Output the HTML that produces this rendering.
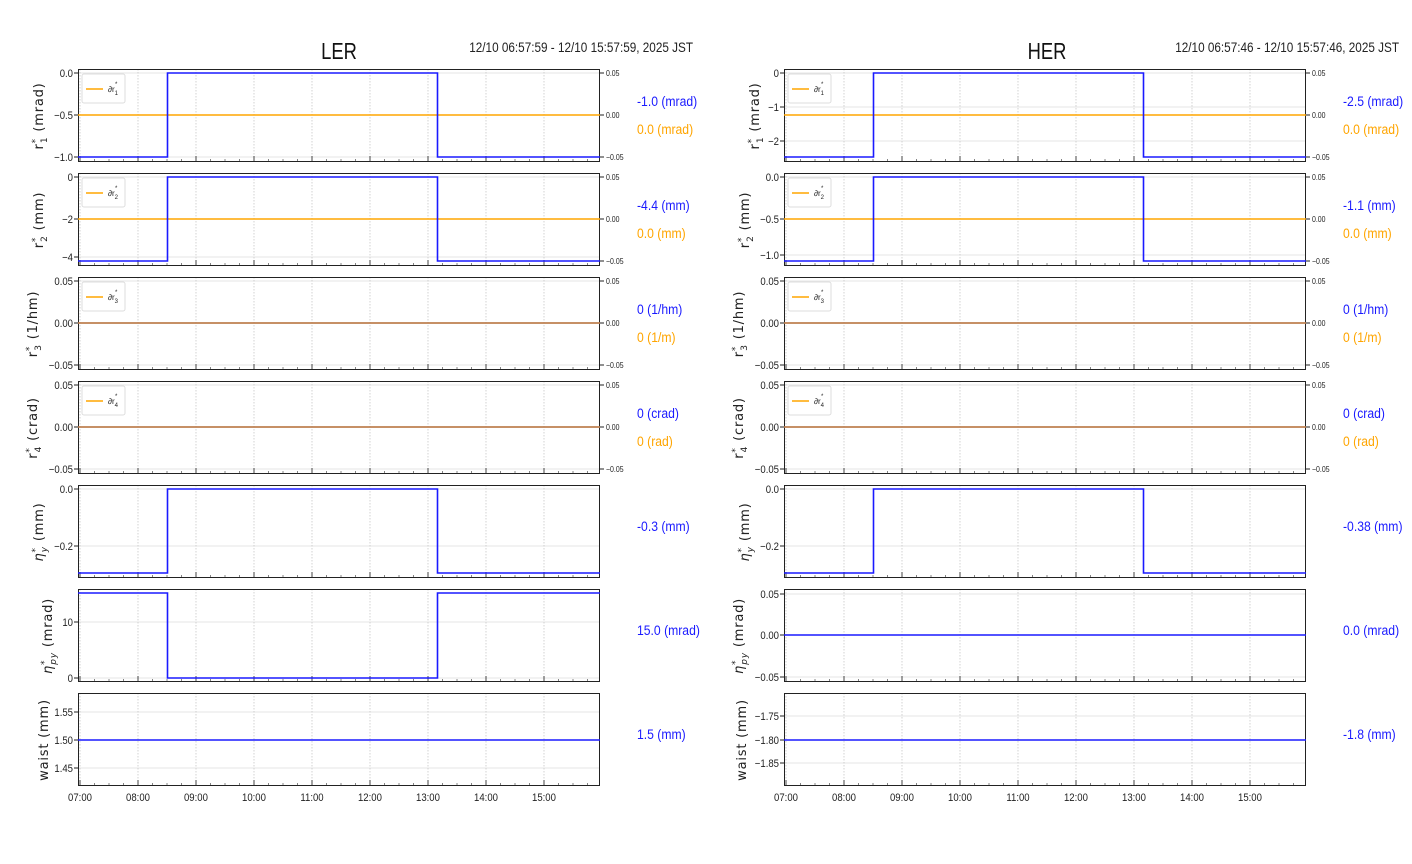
<!DOCTYPE html>
<html><head><meta charset="utf-8"><style>
html,body{margin:0;padding:0;background:#fff;}
svg{display:block;}
text{font-family:"Liberation Sans Narrow","Liberation Sans",sans-serif;}
.tk{font-size:11px;fill:#222;}
.tr{font-size:8px;fill:#222;}
.yl{font-family:"DejaVu Sans",sans-serif;font-size:13px;fill:#222;letter-spacing:0.8px;}
.vb{font-size:14px;fill:#1a1aff;}
.vo{font-size:14px;fill:#ffa500;}
</style></head><body>
<svg width="1412" height="864" viewBox="0 0 1412 864" xmlns="http://www.w3.org/2000/svg">
<defs>
<g id="P">
<path d="M2 0V93M60 0V93M118 0V93M176 0V93M234 0V93M292 0V93M350 0V93M408 0V93M466 0V93" stroke="#c8c8c8" stroke-width="0.8" stroke-dasharray="1.5,1.5" fill="none"/>
<path d="M2 87V93M60 87V93M118 87V93M176 87V93M234 87V93M292 87V93M350 87V93M408 87V93M466 87V93" stroke="#444" stroke-width="1"/>
<path d="M16.5 90V93M31 90V93M45.5 90V93M74.5 90V93M89 90V93M103.5 90V93M132.5 90V93M147 90V93M161.5 90V93M190.5 90V93M205 90V93M219.5 90V93M248.5 90V93M263 90V93M277.5 90V93M306.5 90V93M321 90V93M335.5 90V93M364.5 90V93M379 90V93M393.5 90V93M422.5 90V93M437 90V93M451.5 90V93M480.5 90V93M495 90V93M509.5 90V93" stroke="#666" stroke-width="0.8"/>
<rect x="0.5" y="0.5" width="521" height="92" fill="none" stroke="#222" stroke-width="1"/>
</g>
<g id="R">
<path d="M522 4H526M522 46H526M522 88H526" stroke="#222"/>
<g transform="translate(528,0) scale(0.87,1)">
<text class="tr" x="0" y="7">0.05</text>
<text class="tr" x="0" y="49">0.00</text>
<text class="tr" x="0" y="91">−0.05</text>
</g>
</g>
<path id="HG3" d="M0 4H522M0 46H522M0 88H522" stroke="#ddd" stroke-width="0.8"/>
<path id="STEP" d="M0 88H89.5V4H359.5V88H522" stroke="#1a1aff" stroke-width="1.6" fill="none"/>
<path id="STEPI" d="M0 4H89.5V89H359.5V4H522" stroke="#1a1aff" stroke-width="1.6" fill="none"/>
<rect id="LB" x="4" y="5" width="43" height="29" rx="2" fill="#fff" fill-opacity="0.85" stroke="#ddd"/>
<g id="XL" class="tk" text-anchor="middle" transform="scale(0.87,1)">
<text x="2.3" y="108">07:00</text><text x="69" y="108">08:00</text><text x="135.6" y="108">09:00</text><text x="202.3" y="108">10:00</text><text x="269" y="108">11:00</text><text x="335.6" y="108">12:00</text><text x="402.3" y="108">13:00</text><text x="469" y="108">14:00</text><text x="535.6" y="108">15:00</text>
</g>
</defs>

<!-- Titles -->
<text transform="translate(339,59) scale(0.8,1)" text-anchor="middle" style="font-size:23px" fill="#111">LER</text>
<text transform="translate(693,52) scale(0.87,1)" text-anchor="end" style="font-size:13.5px" fill="#222">12/10 06:57:59 - 12/10 15:57:59, 2025 JST</text>
<text transform="translate(1047,59) scale(0.8,1)" text-anchor="middle" style="font-size:23px" fill="#111">HER</text>
<text transform="translate(1399,52) scale(0.87,1)" text-anchor="end" style="font-size:13.5px" fill="#222">12/10 06:57:46 - 12/10 15:57:46, 2025 JST</text>

<!-- ============ LER ============ -->
<g transform="translate(78,69)">
<use href="#HG3"/><use href="#P"/><use href="#R"/>
<path d="M0 46H522" stroke="#ffa500" stroke-width="1.6"/>
<use href="#STEP"/>
<use href="#LB"/><path d="M8 20H25" stroke="#ffa500" stroke-width="1.6"/><text class="tr" x="30" y="23">∂r<tspan font-size="6" dy="3">1</tspan><tspan font-size="6" dx="-3" dy="-9">*</tspan></text>
<path d="M-4 4H0M-4 46H0M-4 88H0" stroke="#222"/>
<g transform="translate(-5,0) scale(0.87,1)" text-anchor="end">
<text class="tk" x="0" y="8">0.0</text>
<text class="tk" x="0" y="50">−0.5</text>
<text class="tk" x="0" y="92">−1.0</text>
</g>
</g>
<text class="yl" transform="translate(43,116) rotate(-90)" text-anchor="middle">r<tspan font-size="9" dy="-5">*</tspan><tspan font-size="9" dx="-5" dy="9">1</tspan><tspan dy="-4"> (mrad)</tspan></text>
<text class="vb" transform="translate(637,106) scale(0.87,1)">-1.0 (mrad)</text>
<text class="vo" transform="translate(637,134) scale(0.87,1)">0.0 (mrad)</text>

<g transform="translate(78,173)">
<path d="M0 4H522M0 46H522M0 84H522" stroke="#ddd" stroke-width="0.8"/><use href="#P"/><use href="#R"/>
<path d="M0 46H522" stroke="#ffa500" stroke-width="1.6"/>
<use href="#STEP"/>
<use href="#LB"/><path d="M8 20H25" stroke="#ffa500" stroke-width="1.6"/><text class="tr" x="30" y="23">∂r<tspan font-size="6" dy="3">2</tspan><tspan font-size="6" dx="-3" dy="-9">*</tspan></text>
<path d="M-4 4H0M-4 46H0M-4 84H0" stroke="#222"/>
<g transform="translate(-5,0) scale(0.87,1)" text-anchor="end">
<text class="tk" x="0" y="8">0</text>
<text class="tk" x="0" y="50">−2</text>
<text class="tk" x="0" y="88">−4</text>
</g>
</g>
<text class="yl" transform="translate(43,220) rotate(-90)" text-anchor="middle">r<tspan font-size="9" dy="-5">*</tspan><tspan font-size="9" dx="-5" dy="9">2</tspan><tspan dy="-4"> (mm)</tspan></text>
<text class="vb" transform="translate(637,210) scale(0.87,1)">-4.4 (mm)</text>
<text class="vo" transform="translate(637,238) scale(0.87,1)">0.0 (mm)</text>

<g transform="translate(78,277)">
<use href="#HG3"/><use href="#P"/><use href="#R"/>
<path d="M0 46H522" stroke="#1a1aff" stroke-width="1.6"/>
<path d="M0 46H522" stroke="#ffa500" stroke-width="1.4" stroke-opacity="0.8"/>
<use href="#LB"/><path d="M8 20H25" stroke="#ffa500" stroke-width="1.6"/><text class="tr" x="30" y="23">∂r<tspan font-size="6" dy="3">3</tspan><tspan font-size="6" dx="-3" dy="-9">*</tspan></text>
<path d="M-4 4H0M-4 46H0M-4 88H0" stroke="#222"/>
<g transform="translate(-5,0) scale(0.87,1)" text-anchor="end">
<text class="tk" x="0" y="8">0.05</text>
<text class="tk" x="0" y="50">0.00</text>
<text class="tk" x="0" y="92">−0.05</text>
</g>
</g>
<text class="yl" transform="translate(37,324) rotate(-90)" text-anchor="middle">r<tspan font-size="9" dy="-5">*</tspan><tspan font-size="9" dx="-5" dy="9">3</tspan><tspan dy="-4"> (1/hm)</tspan></text>
<text class="vb" transform="translate(637,314) scale(0.87,1)">0 (1/hm)</text>
<text class="vo" transform="translate(637,342) scale(0.87,1)">0 (1/m)</text>

<g transform="translate(78,381)">
<use href="#HG3"/><use href="#P"/><use href="#R"/>
<path d="M0 46H522" stroke="#1a1aff" stroke-width="1.6"/>
<path d="M0 46H522" stroke="#ffa500" stroke-width="1.4" stroke-opacity="0.8"/>
<use href="#LB"/><path d="M8 20H25" stroke="#ffa500" stroke-width="1.6"/><text class="tr" x="30" y="23">∂r<tspan font-size="6" dy="3">4</tspan><tspan font-size="6" dx="-3" dy="-9">*</tspan></text>
<path d="M-4 4H0M-4 46H0M-4 88H0" stroke="#222"/>
<g transform="translate(-5,0) scale(0.87,1)" text-anchor="end">
<text class="tk" x="0" y="8">0.05</text>
<text class="tk" x="0" y="50">0.00</text>
<text class="tk" x="0" y="92">−0.05</text>
</g>
</g>
<text class="yl" transform="translate(37,428) rotate(-90)" text-anchor="middle">r<tspan font-size="9" dy="-5">*</tspan><tspan font-size="9" dx="-5" dy="9">4</tspan><tspan dy="-4"> (crad)</tspan></text>
<text class="vb" transform="translate(637,418) scale(0.87,1)">0 (crad)</text>
<text class="vo" transform="translate(637,446) scale(0.87,1)">0 (rad)</text>

<g transform="translate(78,485)">
<path d="M0 4H522M0 61H522" stroke="#ddd" stroke-width="0.8"/><use href="#P"/>
<use href="#STEP"/>
<path d="M-4 4H0M-4 61H0" stroke="#222"/>
<g transform="translate(-5,0) scale(0.87,1)" text-anchor="end">
<text class="tk" x="0" y="8">0.0</text>
<text class="tk" x="0" y="65">−0.2</text>
</g>
</g>
<text class="yl" transform="translate(43,532) rotate(-90)" text-anchor="middle"><tspan font-style="italic">η</tspan><tspan font-size="9" dy="-5">*</tspan><tspan font-size="9" font-style="italic" dx="-5" dy="9">y</tspan><tspan dy="-4"> (mm)</tspan></text>
<text class="vb" transform="translate(637,531) scale(0.87,1)">-0.3 (mm)</text>

<g transform="translate(78,589)">
<path d="M0 33H522M0 89H522" stroke="#ddd" stroke-width="0.8"/><use href="#P"/>
<use href="#STEPI"/>
<path d="M-4 33H0M-4 89H0" stroke="#222"/>
<g transform="translate(-5,0) scale(0.87,1)" text-anchor="end">
<text class="tk" x="0" y="37">10</text>
<text class="tk" x="0" y="93">0</text>
</g>
</g>
<text class="yl" transform="translate(52,636) rotate(-90)" text-anchor="middle"><tspan font-style="italic">η</tspan><tspan font-size="9" dy="-5">*</tspan><tspan font-size="9" font-style="italic" dx="-5" dy="9">py</tspan><tspan dy="-4"> (mrad)</tspan></text>
<text class="vb" transform="translate(637,635) scale(0.87,1)">15.0 (mrad)</text>

<g transform="translate(78,693)">
<path d="M0 19H522M0 47H522M0 75H522" stroke="#ddd" stroke-width="0.8"/><use href="#P"/>
<path d="M0 47H522" stroke="#1a1aff" stroke-width="1.6"/>
<path d="M-4 19H0M-4 47H0M-4 75H0" stroke="#222"/>
<g transform="translate(-5,0) scale(0.87,1)" text-anchor="end">
<text class="tk" x="0" y="23">1.55</text>
<text class="tk" x="0" y="51">1.50</text>
<text class="tk" x="0" y="79">1.45</text>
</g>
<use href="#XL"/>
</g>
<text class="yl" transform="translate(48,740) rotate(-90)" text-anchor="middle">waist (mm)</text>
<text class="vb" transform="translate(637,739) scale(0.87,1)">1.5 (mm)</text>

<!-- ============ HER ============ -->
<g transform="translate(784,69)">
<path d="M0 4H522M0 38H522M0 72H522" stroke="#ddd" stroke-width="0.8"/><use href="#P"/><use href="#R"/>
<path d="M0 46H522" stroke="#ffa500" stroke-width="1.6"/>
<use href="#STEP"/>
<use href="#LB"/><path d="M8 20H25" stroke="#ffa500" stroke-width="1.6"/><text class="tr" x="30" y="23">∂r<tspan font-size="6" dy="3">1</tspan><tspan font-size="6" dx="-3" dy="-9">*</tspan></text>
<path d="M-4 4H0M-4 38H0M-4 72H0" stroke="#222"/>
<g transform="translate(-5,0) scale(0.87,1)" text-anchor="end">
<text class="tk" x="0" y="8">0</text>
<text class="tk" x="0" y="42">−1</text>
<text class="tk" x="0" y="76">−2</text>
</g>
</g>
<text class="yl" transform="translate(759,116) rotate(-90)" text-anchor="middle">r<tspan font-size="9" dy="-5">*</tspan><tspan font-size="9" dx="-5" dy="9">1</tspan><tspan dy="-4"> (mrad)</tspan></text>
<text class="vb" transform="translate(1343,106) scale(0.87,1)">-2.5 (mrad)</text>
<text class="vo" transform="translate(1343,134) scale(0.87,1)">0.0 (mrad)</text>

<g transform="translate(784,173)">
<path d="M0 4H522M0 46H522M0 82H522" stroke="#ddd" stroke-width="0.8"/><use href="#P"/><use href="#R"/>
<path d="M0 46H522" stroke="#ffa500" stroke-width="1.6"/>
<use href="#STEP"/>
<use href="#LB"/><path d="M8 20H25" stroke="#ffa500" stroke-width="1.6"/><text class="tr" x="30" y="23">∂r<tspan font-size="6" dy="3">2</tspan><tspan font-size="6" dx="-3" dy="-9">*</tspan></text>
<path d="M-4 4H0M-4 46H0M-4 82H0" stroke="#222"/>
<g transform="translate(-5,0) scale(0.87,1)" text-anchor="end">
<text class="tk" x="0" y="8">0.0</text>
<text class="tk" x="0" y="50">−0.5</text>
<text class="tk" x="0" y="86">−1.0</text>
</g>
</g>
<text class="yl" transform="translate(749,220) rotate(-90)" text-anchor="middle">r<tspan font-size="9" dy="-5">*</tspan><tspan font-size="9" dx="-5" dy="9">2</tspan><tspan dy="-4"> (mm)</tspan></text>
<text class="vb" transform="translate(1343,210) scale(0.87,1)">-1.1 (mm)</text>
<text class="vo" transform="translate(1343,238) scale(0.87,1)">0.0 (mm)</text>

<g transform="translate(784,277)">
<use href="#HG3"/><use href="#P"/><use href="#R"/>
<path d="M0 46H522" stroke="#1a1aff" stroke-width="1.6"/>
<path d="M0 46H522" stroke="#ffa500" stroke-width="1.4" stroke-opacity="0.8"/>
<use href="#LB"/><path d="M8 20H25" stroke="#ffa500" stroke-width="1.6"/><text class="tr" x="30" y="23">∂r<tspan font-size="6" dy="3">3</tspan><tspan font-size="6" dx="-3" dy="-9">*</tspan></text>
<path d="M-4 4H0M-4 46H0M-4 88H0" stroke="#222"/>
<g transform="translate(-5,0) scale(0.87,1)" text-anchor="end">
<text class="tk" x="0" y="8">0.05</text>
<text class="tk" x="0" y="50">0.00</text>
<text class="tk" x="0" y="92">−0.05</text>
</g>
</g>
<text class="yl" transform="translate(743,324) rotate(-90)" text-anchor="middle">r<tspan font-size="9" dy="-5">*</tspan><tspan font-size="9" dx="-5" dy="9">3</tspan><tspan dy="-4"> (1/hm)</tspan></text>
<text class="vb" transform="translate(1343,314) scale(0.87,1)">0 (1/hm)</text>
<text class="vo" transform="translate(1343,342) scale(0.87,1)">0 (1/m)</text>

<g transform="translate(784,381)">
<use href="#HG3"/><use href="#P"/><use href="#R"/>
<path d="M0 46H522" stroke="#1a1aff" stroke-width="1.6"/>
<path d="M0 46H522" stroke="#ffa500" stroke-width="1.4" stroke-opacity="0.8"/>
<use href="#LB"/><path d="M8 20H25" stroke="#ffa500" stroke-width="1.6"/><text class="tr" x="30" y="23">∂r<tspan font-size="6" dy="3">4</tspan><tspan font-size="6" dx="-3" dy="-9">*</tspan></text>
<path d="M-4 4H0M-4 46H0M-4 88H0" stroke="#222"/>
<g transform="translate(-5,0) scale(0.87,1)" text-anchor="end">
<text class="tk" x="0" y="8">0.05</text>
<text class="tk" x="0" y="50">0.00</text>
<text class="tk" x="0" y="92">−0.05</text>
</g>
</g>
<text class="yl" transform="translate(743,428) rotate(-90)" text-anchor="middle">r<tspan font-size="9" dy="-5">*</tspan><tspan font-size="9" dx="-5" dy="9">4</tspan><tspan dy="-4"> (crad)</tspan></text>
<text class="vb" transform="translate(1343,418) scale(0.87,1)">0 (crad)</text>
<text class="vo" transform="translate(1343,446) scale(0.87,1)">0 (rad)</text>

<g transform="translate(784,485)">
<path d="M0 4H522M0 61H522" stroke="#ddd" stroke-width="0.8"/><use href="#P"/>
<use href="#STEP"/>
<path d="M-4 4H0M-4 61H0" stroke="#222"/>
<g transform="translate(-5,0) scale(0.87,1)" text-anchor="end">
<text class="tk" x="0" y="8">0.0</text>
<text class="tk" x="0" y="65">−0.2</text>
</g>
</g>
<text class="yl" transform="translate(749,532) rotate(-90)" text-anchor="middle"><tspan font-style="italic">η</tspan><tspan font-size="9" dy="-5">*</tspan><tspan font-size="9" font-style="italic" dx="-5" dy="9">y</tspan><tspan dy="-4"> (mm)</tspan></text>
<text class="vb" transform="translate(1343,531) scale(0.87,1)">-0.38 (mm)</text>

<g transform="translate(784,589)">
<path d="M0 5H522M0 46H522M0 88H522" stroke="#ddd" stroke-width="0.8"/><use href="#P"/>
<path d="M0 46H522" stroke="#1a1aff" stroke-width="1.6"/>
<path d="M-4 5H0M-4 46H0M-4 88H0" stroke="#222"/>
<g transform="translate(-5,0) scale(0.87,1)" text-anchor="end">
<text class="tk" x="0" y="9">0.05</text>
<text class="tk" x="0" y="50">0.00</text>
<text class="tk" x="0" y="92">−0.05</text>
</g>
</g>
<text class="yl" transform="translate(743,636) rotate(-90)" text-anchor="middle"><tspan font-style="italic">η</tspan><tspan font-size="9" dy="-5">*</tspan><tspan font-size="9" font-style="italic" dx="-5" dy="9">py</tspan><tspan dy="-4"> (mrad)</tspan></text>
<text class="vb" transform="translate(1343,635) scale(0.87,1)">0.0 (mrad)</text>

<g transform="translate(784,693)">
<path d="M0 23H522M0 47H522M0 70H522" stroke="#ddd" stroke-width="0.8"/><use href="#P"/>
<path d="M0 47H522" stroke="#1a1aff" stroke-width="1.6"/>
<path d="M-4 23H0M-4 47H0M-4 70H0" stroke="#222"/>
<g transform="translate(-5,0) scale(0.87,1)" text-anchor="end">
<text class="tk" x="0" y="27">−1.75</text>
<text class="tk" x="0" y="51">−1.80</text>
<text class="tk" x="0" y="74">−1.85</text>
</g>
<use href="#XL"/>
</g>
<text class="yl" transform="translate(746,740) rotate(-90)" text-anchor="middle">waist (mm)</text>
<text class="vb" transform="translate(1343,739) scale(0.87,1)">-1.8 (mm)</text>
</svg>
</body></html>
